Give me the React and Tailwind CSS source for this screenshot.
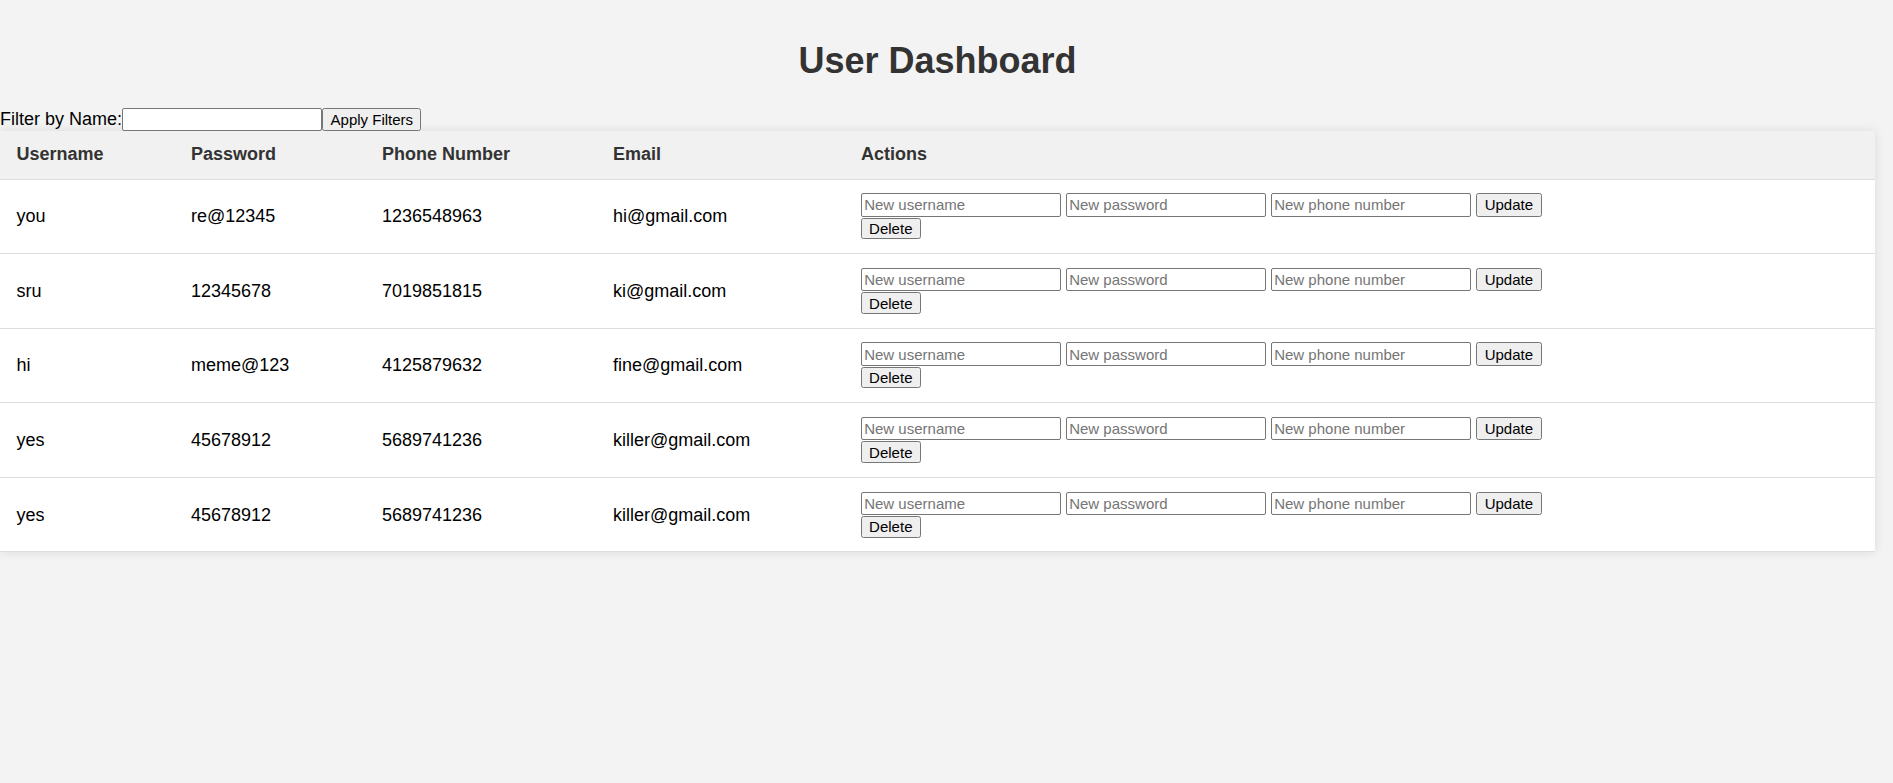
import { useState } from 'react';

const initialUsers = [
  { username: 'you', password: 're@12345', phone: '1236548963', email: 'hi@gmail.com' },
  { username: 'sru', password: '12345678', phone: '7019851815', email: 'ki@gmail.com' },
  { username: 'hi', password: 'meme@123', phone: '4125879632', email: 'fine@gmail.com' },
  { username: 'yes', password: '45678912', phone: '5689741236', email: 'killer@gmail.com' },
  { username: 'yes', password: '45678912', phone: '5689741236', email: 'killer@gmail.com' },
];

const inputCls =
  'w-[200px] h-[23.3px] px-[2.2px] border border-[#767676] rounded-[2px] bg-white text-[15px] text-black placeholder:text-[#757575] outline-none';
const btnCls =
  'px-0 border border-[#767676] rounded-[2.5px] bg-[#efefef] text-[15px] text-black leading-none';
const cellCls = 'border-b border-[#dddddd] px-[16.5px] py-[13.8px] align-middle leading-[20.24px]';

export default function App() {
  const [filterName, setFilterName] = useState('');
  const [users] = useState(initialUsers);

  return (
    <div className="min-h-screen w-full bg-[#f3f3f3] font-['Liberation_Sans',Arial,sans-serif] text-[18px] text-black">
      <div className="w-[1875px]">
        {/* タイトル */}
        <h1 className="pt-[40.5px] text-center text-[36px] leading-[40.5px] font-bold text-[#333]">
          User Dashboard
        </h1>

        {/* フィルター */}
        <div className="mt-[27.3px] flex h-[22.4px] items-center">
          <label className="w-[122.3px] whitespace-nowrap leading-[20.24px]">Filter by Name:</label>
          <input
            type="text"
            value={filterName}
            onChange={(e) => setFilterName(e.target.value)}
            className="h-[22.4px] w-[200px] border border-[#767676] rounded-[2px] bg-white px-[2.2px] text-[15px] outline-none"
          />
          <button className={btnCls + ' h-[22.4px] w-[99px]'}>Apply Filters</button>
        </div>

        {/* ユーザー一覧 */}
        <table className="w-[1875px] table-fixed border-collapse bg-white shadow-[0_0_10px_rgba(0,0,0,0.1)]">
          <thead>
            <tr className="bg-[#f1f1f1] text-left text-[#333]">
              <th className={cellCls + ' w-[174.5px] font-bold'}>Username</th>
              <th className={cellCls + ' w-[191px] font-bold'}>Password</th>
              <th className={cellCls + ' w-[231px] font-bold'}>Phone Number</th>
              <th className={cellCls + ' w-[248px] font-bold'}>Email</th>
              <th className={cellCls + ' font-bold'}>Actions</th>
            </tr>
          </thead>
          <tbody>
            {users.map((user, index) => (
              <tr key={index}>
                <td className={cellCls}>{user.username}</td>
                <td className={cellCls}>{user.password}</td>
                <td className={cellCls}>{user.phone}</td>
                <td className={cellCls}>{user.email}</td>
                <td className={cellCls}>
                  <div className="flex items-center gap-[5px]">
                    <input type="text" placeholder="New username" className={inputCls} />
                    <input type="password" placeholder="New password" className={inputCls} />
                    <input type="text" placeholder="New phone number" className={inputCls} />
                    <button className={btnCls + ' h-[23.3px] w-[65.7px]'}>Update</button>
                  </div>
                  <div className="mt-[1px] flex">
                    <button className={btnCls + ' h-[21.7px] w-[59.6px]'}>Delete</button>
                  </div>
                </td>
              </tr>
            ))}
          </tbody>
        </table>
      </div>
    </div>
  );
}
